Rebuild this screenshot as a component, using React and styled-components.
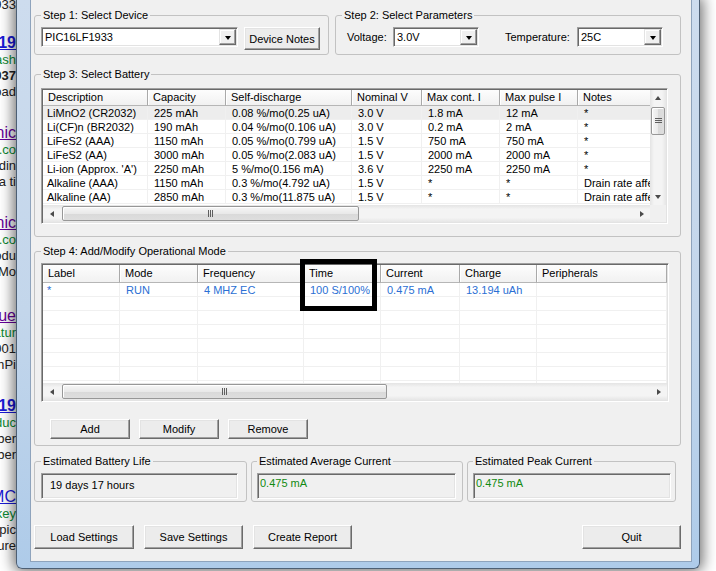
import React from "react";
import styled, { createGlobalStyle } from "styled-components";

const GlobalStyle = createGlobalStyle`
  html, body {
    margin: 0;
    padding: 0;
    background: #fff;
  }
  body {
    font-family: "Liberation Sans", Arial, sans-serif;
    font-size: 11px;
    color: #000;
  }
`;

const Page = styled.div`
  display: flex;
  width: 716px;
  height: 571px;
  overflow: hidden;
  background: #fff;
`;

/* ---------- web page peeking out behind the window ---------- */

const WebStrip = styled.div`
  width: 16px;
  flex-shrink: 0;
  display: flex;
  flex-direction: column;
  overflow: hidden;
  font-family: "Liberation Sans", Arial, sans-serif;
`;

const ResultBlock = styled.div`
  display: flex;
  flex-direction: column;
  margin-top: ${(p) => p.$mt}px;
`;

const WebLine = styled.div`
  display: flex;
  justify-content: flex-end;
  white-space: nowrap;
  font-size: ${(p) => (p.$kind === "title" ? 16 : 13)}px;
  line-height: ${(p) => (p.$kind === "title" ? 18 : 16)}px;
  color: ${(p) =>
    p.$kind === "title" ? p.$color : p.$kind === "url" ? "#0b8a33" : "#222"};
  text-decoration: ${(p) => (p.$kind === "title" ? "underline" : "none")};
  font-weight: ${(p) => (p.$bold ? "bold" : "normal")};
`;

/* ---------- window chrome ---------- */

const Window = styled.div`
  width: 684px;
  height: 569px;
  flex-shrink: 0;
  box-sizing: border-box;
  display: flex;
  padding: 0 7px 6px 13px;
  background: linear-gradient(180deg, #cddcee 0%, #c3d6eb 55%, #aecbe9 100%);
  border: 1px solid #4d5f74;
  border-top: none;
  border-radius: 0 0 6px 6px;
  box-shadow: 0 0 14px 3px rgba(0, 0, 0, 0.55);
`;

const Client = styled.div`
  flex: 1;
  box-sizing: border-box;
  display: flex;
  flex-direction: column;
  background: #f0f0f0;
  border: 1px solid #8ea3bc;
  border-top: none;
  padding: 9px 10px 0 3px;
`;

/* ---------- group boxes ---------- */

const GroupBox = styled.fieldset`
  margin: ${(p) => p.$mt || 0}px 0 0 0;
  padding: ${(p) => p.$pad || "5px 6px 4px 6px"};
  border: 1px solid #c2c2c2;
  border-radius: 3px;
  min-width: 0;
  box-sizing: border-box;
  width: ${(p) => (p.$w ? `${p.$w}px` : "auto")};
  flex: ${(p) => (p.$grow ? "1" : "none")};
`;

const Legend = styled.legend`
  padding: 0 2px;
  font-size: 11px;
  line-height: 13px;
  color: #000;
`;

const TopRow = styled.div`
  display: flex;
  gap: 6px;
`;

const FieldRow = styled.div`
  display: flex;
  align-items: flex-start;
  height: 23px;
  gap: ${(p) => p.$gap || 0}px;
  padding-left: ${(p) => p.$pl || 0}px;
`;

const FieldLabel = styled.span`
  width: ${(p) => p.$w}px;
  margin-left: ${(p) => p.$ml || 0}px;
  line-height: 20px;
  white-space: nowrap;
`;

/* ---------- combo box ---------- */

const Combo = styled.div`
  display: flex;
  width: ${(p) => p.$w}px;
  height: 20px;
  box-sizing: border-box;
  padding: 1px;
  background: #fff;
  border: 1px solid;
  border-color: #a0a0a0 #fff #fff #a0a0a0;
  box-shadow: inset 1px 1px #696969, inset -1px -1px #e3e3e3;
`;

const ComboText = styled.span`
  flex: 1;
  padding: 1px 0 0 2px;
  line-height: 15px;
  white-space: nowrap;
  overflow: hidden;
`;

const ComboButton = styled.div`
  width: 17px;
  height: 16px;
  box-sizing: border-box;
  display: flex;
  align-items: center;
  justify-content: center;
  background: #f0f0f0;
  border: 1px solid;
  border-color: #e3e3e3 #696969 #696969 #e3e3e3;
  box-shadow: inset -1px -1px #a0a0a0, inset 1px 1px #fff;
`;

const DownTriangle = styled.span`
  width: 0;
  height: 0;
  border-style: solid;
  border-width: 4px 3.5px 0 3.5px;
  border-color: #000 transparent transparent transparent;
  margin-top: 1px;
`;

/* ---------- buttons ---------- */

const Button = styled.button`
  width: ${(p) => p.$w}px;
  height: ${(p) => p.$h}px;
  flex-shrink: 0;
  margin-left: ${(p) => (p.$pushRight ? "auto" : "0")};
  padding: 0;
  font-family: "Liberation Sans", Arial, sans-serif;
  font-size: 11px;
  color: #000;
  background: #ececec;
  border: 1px solid;
  border-color: #fff #6b6b6b #6b6b6b #fff;
  box-shadow: inset -1px -1px #a0a0a0, inset 1px 1px #e3e3e3;
`;

/* ---------- list view ---------- */

const ListFrame = styled.div`
  position: relative;
  width: ${(p) => p.$w}px;
  height: ${(p) => p.$h}px;
  box-sizing: border-box;
  padding: 1px;
  display: grid;
  grid-template-columns: ${(p) => (p.$vscroll ? "1fr 16px" : "1fr")};
  grid-template-rows: 1fr 17px;
  background: #fff;
  border: 1px solid;
  border-color: #a0a0a0 #fff #fff #a0a0a0;
  box-shadow: inset 1px 1px #696969, inset -1px -1px #e3e3e3;
`;

const Table = styled.div`
  overflow: hidden;
  min-width: 0;
  min-height: 0;
`;

const HeaderRow = styled.div`
  display: grid;
  grid-template-columns: ${(p) => p.$cols};
  height: ${(p) => p.$h}px;
`;

const HeaderCell = styled.div`
  box-sizing: border-box;
  padding-left: 5px;
  line-height: ${(p) => p.$h - 1}px;
  white-space: nowrap;
  overflow: hidden;
  background: linear-gradient(180deg, #fdfdfd 0%, #f1f1f1 100%);
  border-right: 1px solid #a9a9a9;
  border-bottom: 1px solid #b6b6b6;
  box-shadow: inset 1px 0 #fff;
`;

const Row = styled.div`
  display: grid;
  grid-template-columns: ${(p) => p.$cols};
  height: 14px;
  background: ${(p) => (p.$hl ? "#ededed" : "#fff")};
  color: ${(p) => p.$color || "#000"};
`;

const Cell = styled.div`
  box-sizing: border-box;
  padding-left: 6px;
  line-height: 14px;
  white-space: nowrap;
  overflow: hidden;
  border-right: 1px solid #f0f0f0;
  border-bottom: 1px solid #f0f0f0;

  &:first-child {
    padding-left: 4px;
  }
`;

const Highlight = styled.div`
  position: absolute;
  left: 258px;
  top: -5px;
  width: 77px;
  height: 52px;
  box-sizing: border-box;
  border: 5px solid #000;
  pointer-events: none;
`;

/* ---------- scroll bars ---------- */

const HScroll = styled.div`
  display: flex;
  align-items: center;
  background: linear-gradient(180deg, #e4e4e4 0%, #f4f4f4 25%, #f4f4f4 75%, #e6e6e6 100%);
`;

const VScroll = styled.div`
  display: flex;
  flex-direction: column;
  align-items: center;
  background: linear-gradient(90deg, #e4e4e4 0%, #f4f4f4 25%, #f4f4f4 75%, #e6e6e6 100%);
`;

const ScrollCorner = styled.div`
  background: #f0f0f0;
`;

const ArrowBox = styled.div`
  width: ${(p) => (p.$vertical ? 16 : 17)}px;
  height: ${(p) => (p.$vertical ? 16 : 17)}px;
  flex-shrink: 0;
  display: flex;
  align-items: center;
  justify-content: center;
`;

const arrowBorders = {
  left: "border-width: 3.5px 4px 3.5px 0; border-color: transparent #4a4a4a transparent transparent;",
  right: "border-width: 3.5px 0 3.5px 4px; border-color: transparent transparent transparent #4a4a4a;",
  up: "border-width: 0 3.5px 4px 3.5px; border-color: transparent transparent #4a4a4a transparent;",
  down: "border-width: 4px 3.5px 0 3.5px; border-color: #4a4a4a transparent transparent transparent;",
};

const Arrow = styled.span`
  width: 0;
  height: 0;
  border-style: solid;
  ${(p) => arrowBorders[p.$dir]}
`;

const Thumb = styled.div`
  box-sizing: border-box;
  flex-shrink: 0;
  display: flex;
  align-items: center;
  justify-content: center;
  width: ${(p) => (p.$vertical ? "14px" : `${p.$len}px`)};
  height: ${(p) => (p.$vertical ? `${p.$len}px` : "15px")};
  margin: ${(p) => (p.$vertical ? "1px 0 0 0" : "0 0 0 2px")};
  border: 1px solid #979797;
  border-radius: 2px;
  background: ${(p) =>
    p.$vertical
      ? "linear-gradient(90deg, #f6f6f6 0%, #e9e9e9 50%, #d9d9d9 51%, #dedede 100%)"
      : "linear-gradient(180deg, #f6f6f6 0%, #e9e9e9 50%, #d9d9d9 51%, #dedede 100%)"};
  box-shadow: inset 1px 1px #fff;
`;

const Spacer = styled.div`
  flex: 1;
`;

const Grip = ({ vertical }) =>
  vertical ? (
    <svg width="7" height="6" viewBox="0 0 7 6">
      <path d="M0 0.5H7M0 2.5H7M0 4.5H7" stroke="#5e5e5e" strokeWidth="1" />
    </svg>
  ) : (
    <svg width="6" height="7" viewBox="0 0 6 7">
      <path d="M0.5 0V7M2.5 0V7M4.5 0V7" stroke="#5e5e5e" strokeWidth="1" />
    </svg>
  );

/* ---------- estimate read-outs ---------- */

const ButtonRow = styled.div`
  display: flex;
  gap: ${(p) => p.$gap}px;
  margin-top: ${(p) => p.$mt}px;
  padding-left: ${(p) => p.$pl || 0}px;
`;

const EstimateRow = styled.div`
  display: flex;
  gap: 4px;
`;

const Readout = styled.div`
  height: 26px;
  box-sizing: border-box;
  padding: ${(p) => p.$pad};
  line-height: 14px;
  white-space: nowrap;
  color: ${(p) => p.$color || "#000"};
  background: #f0f0f0;
  border: 1px solid;
  border-color: #a0a0a0 #fff #fff #a0a0a0;
  box-shadow: inset 1px 1px #696969, inset -1px -1px #e3e3e3;
`;

/* ---------- data ---------- */

const webResults = [
  { mt: -3, lines: [{ kind: "text", text: "Low power device PIC16LF1933" }] },
  {
    mt: 21,
    lines: [
      { kind: "title", color: "#1a1ad6", bold: true, text: "PIC16LF19" },
      { kind: "url", text: "www.microchip.com/flash" },
      { kind: "text", bold: true, text: "PIC16LF1937" },
      { kind: "text", text: "datasheet download" },
    ],
  },
  {
    mt: 24,
    lines: [
      { kind: "title", color: "#660099", text: "Low Power Electronic" },
      { kind: "url", text: "www.electronicproducts.co" },
      { kind: "text", text: "battery life, includin" },
      { kind: "text", text: "the device, a ti" },
    ],
  },
  {
    mt: 24,
    lines: [
      { kind: "title", color: "#660099", text: "Power Electronic" },
      { kind: "url", text: "www.eetimes.co" },
      { kind: "text", text: "new produ" },
      { kind: "text", text: "XLP Mo" },
    ],
  },
  {
    mt: 27,
    lines: [
      { kind: "title", color: "#660099", text: "Battery Life Technique" },
      { kind: "url", text: "www.eetasia.com/featur" },
      { kind: "text", text: "Jan 2001" },
      { kind: "text", text: "nanoWatt XLP ... with PIC and mPi" },
    ],
  },
  {
    mt: 24,
    lines: [
      { kind: "title", color: "#1a1ad6", bold: true, text: "PIC16F19" },
      { kind: "url", text: "www.microchip.com/produc" },
      { kind: "text", text: "The number" },
      { kind: "text", text: "The number" },
    ],
  },
  {
    mt: 25,
    lines: [
      { kind: "title", color: "#1a1ad6", text: "XLP MC" },
      { kind: "url", text: "www.monkey" },
      { kind: "text", text: "topic" },
      { kind: "text", text: "feature" },
    ],
  },
];

const batteryCols = "105px 78px 126px 70px 78px 78px 110px";
const batteryHeaders = [
  "Description",
  "Capacity",
  "Self-discharge",
  "Nominal V",
  "Max cont. I",
  "Max pulse I",
  "Notes",
];
const batteries = [
  ["LiMnO2 (CR2032)", "225 mAh", "0.08 %/mo(0.25 uA)", "3.0 V", "1.8 mA", "12 mA", "*"],
  ["Li(CF)n (BR2032)", "190 mAh", "0.04 %/mo(0.106 uA)", "3.0 V", "0.2 mA", "2 mA", "*"],
  ["LiFeS2 (AAA)", "1150 mAh", "0.05 %/mo(0.799 uA)", "1.5 V", "750 mA", "750 mA", "*"],
  ["LiFeS2 (AA)", "3000 mAh", "0.05 %/mo(2.083 uA)", "1.5 V", "2000 mA", "2000 mA", "*"],
  ["Li-ion (Approx. 'A')", "2250 mAh", "5 %/mo(0.156 mA)", "3.6 V", "2250 mA", "2250 mA", "*"],
  ["Alkaline (AAA)", "1150 mAh", "0.3 %/mo(4.792 uA)", "1.5 V", "*", "*", "Drain rate affects capacity"],
  ["Alkaline (AA)", "2850 mAh", "0.3 %/mo(11.875 uA)", "1.5 V", "*", "*", "Drain rate affects capacity"],
];

const modeCols = "77px 78px 106px 77px 79px 77px 130px";
const modeHeaders = ["Label", "Mode", "Frequency", "Time", "Current", "Charge", "Peripherals"];
const modes = [
  ["*", "RUN", "4 MHZ EC", "100 S/100%", "0.475 mA", "13.194 uAh", ""],
  ["", "", "", "", "", "", ""],
  ["", "", "", "", "", "", ""],
  ["", "", "", "", "", "", ""],
  ["", "", "", "", "", "", ""],
  ["", "", "", "", "", "", ""],
  ["", "", "", "", "", "", ""],
  ["", "", "", "", "", "", ""],
];

const ListView = ({ w, h, cols, headers, headerH, rows, rowColor, hlFirst, vscroll, thumbLen, children }) => (
  <ListFrame $w={w} $h={h} $vscroll={vscroll}>
    <Table>
      <HeaderRow $cols={cols} $h={headerH}>
        {headers.map((t) => (
          <HeaderCell key={t} $h={headerH}>
            {t}
          </HeaderCell>
        ))}
      </HeaderRow>
      {rows.map((r, i) => (
        <Row key={i} $cols={cols} $hl={hlFirst && i === 0} $color={rowColor}>
          {r.map((c, j) => (
            <Cell key={j}>{c}</Cell>
          ))}
        </Row>
      ))}
    </Table>
    {vscroll && (
      <VScroll>
        <ArrowBox $vertical>
          <Arrow $dir="up" />
        </ArrowBox>
        <Thumb $vertical $len={28}>
          <Grip vertical />
        </Thumb>
        <Spacer />
        <ArrowBox $vertical>
          <Arrow $dir="down" />
        </ArrowBox>
      </VScroll>
    )}
    <HScroll>
      <ArrowBox>
        <Arrow $dir="left" />
      </ArrowBox>
      <Thumb $len={thumbLen}>
        <Grip />
      </Thumb>
      <Spacer />
      <ArrowBox>
        <Arrow $dir="right" />
      </ArrowBox>
    </HScroll>
    {vscroll && <ScrollCorner />}
    {children}
  </ListFrame>
);

const App = () => {
  return (
    <Page>
      <GlobalStyle />
      <WebStrip>
        {webResults.map((b, i) => (
          <ResultBlock key={i} $mt={b.mt}>
            {b.lines.map((l, j) => (
              <WebLine key={j} $kind={l.kind} $color={l.color} $bold={l.bold}>
                {l.text}
              </WebLine>
            ))}
          </ResultBlock>
        ))}
      </WebStrip>

      <Window>
        <Client>
          <TopRow>
            <GroupBox $w={295}>
              <Legend>Step 1: Select Device</Legend>
              <FieldRow $gap={6}>
                <Combo $w={197}>
                  <ComboText>PIC16LF1933</ComboText>
                  <ComboButton>
                    <DownTriangle />
                  </ComboButton>
                </Combo>
                <Button $w={76} $h={23}>
                  Device Notes
                </Button>
              </FieldRow>
            </GroupBox>
            <GroupBox $grow>
              <Legend>Step 2: Select Parameters</Legend>
              <FieldRow $pl={5}>
                <FieldLabel $w={46}>Voltage:</FieldLabel>
                <Combo $w={86}>
                  <ComboText>3.0V</ComboText>
                  <ComboButton>
                    <DownTriangle />
                  </ComboButton>
                </Combo>
                <FieldLabel $w={72} $ml={26}>
                  Temperature:
                </FieldLabel>
                <Combo $w={86}>
                  <ComboText>25C</ComboText>
                  <ComboButton>
                    <DownTriangle />
                  </ComboButton>
                </Combo>
              </FieldRow>
            </GroupBox>
          </TopRow>

          <GroupBox $mt={13} $pad="7px 6px 12px 6px">
            <Legend>Step 3: Select Battery</Legend>
            <ListView
              w={627}
              h={136}
              cols={batteryCols}
              headers={batteryHeaders}
              headerH={16}
              rows={batteries}
              hlFirst
              vscroll
              thumbLen={297}
            />
          </GroupBox>

          <GroupBox $mt={8} $pad="5px 6px 6px 6px">
            <Legend>Step 4: Add/Modify Operational Mode</Legend>
            <ListView
              w={628}
              h={139}
              cols={modeCols}
              headers={modeHeaders}
              headerH={18}
              rows={modes}
              rowColor="#2b6fd4"
              thumbLen={325}
            >
              <Highlight />
            </ListView>
            <ButtonRow $gap={9} $mt={17} $pl={9}>
              <Button $w={80} $h={20}>
                Add
              </Button>
              <Button $w={80} $h={20}>
                Modify
              </Button>
              <Button $w={80} $h={20}>
                Remove
              </Button>
            </ButtonRow>
          </GroupBox>

          <EstimateRow>
            <GroupBox $w={213} $mt={9} $pad="5px 8px 2px 6px">
              <Legend>Estimated Battery Life</Legend>
              <Readout $pad="4px 0 0 8px">19 days 17 hours</Readout>
            </GroupBox>
            <GroupBox $w={212} $mt={9} $pad="5px 6px 2px 5px">
              <Legend>Estimated Average Current</Legend>
              <Readout $pad="2px 0 0 2px" $color="#118a11">
                0.475 mA
              </Readout>
            </GroupBox>
            <GroupBox $w={209} $mt={9} $pad="5px 4px 2px 5px">
              <Legend>Estimated Peak Current</Legend>
              <Readout $pad="2px 0 0 2px" $color="#118a11">
                0.475 mA
              </Readout>
            </GroupBox>
          </EstimateRow>

          <ButtonRow $gap={10} $mt={23}>
            <Button $w={100} $h={24}>
              Load Settings
            </Button>
            <Button $w={99} $h={24}>
              Save Settings
            </Button>
            <Button $w={99} $h={24}>
              Create Report
            </Button>
            <Button $w={99} $h={24} $pushRight>
              Quit
            </Button>
          </ButtonRow>
        </Client>
      </Window>
    </Page>
  );
};

export default App;
